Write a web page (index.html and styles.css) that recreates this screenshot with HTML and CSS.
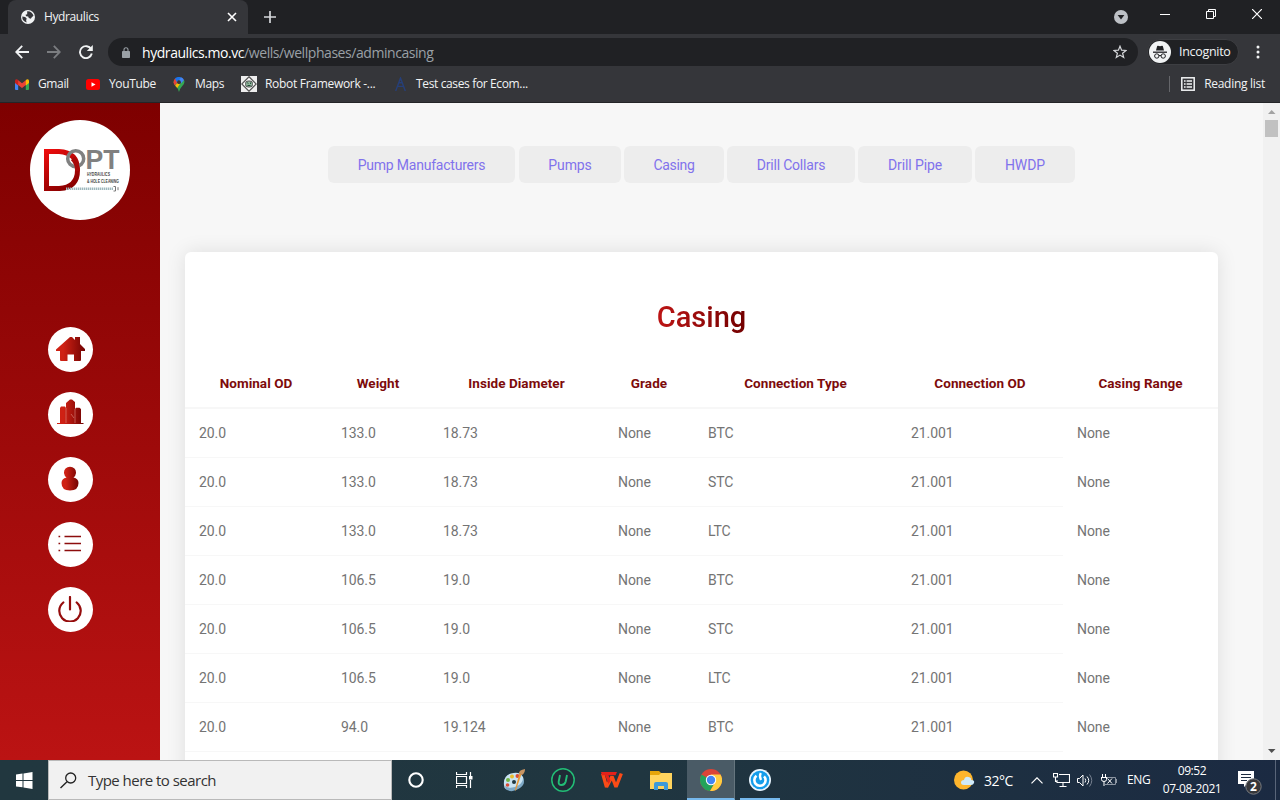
FILE: index.html
```html
<!DOCTYPE html>
<html lang="en">
<head>
<meta charset="utf-8">
<title>Hydraulics</title>
<link rel="stylesheet" href="styles.css">
</head>
<body>
<div class="desktop">
  <header class="browser">
    <div class="tabstrip">
      <div class="tab">
        <svg class="globe" width="14" height="14" viewBox="0 0 14 14"><circle cx="7" cy="7" r="7" fill="#f1f3f4"/><path d="M1.3 6.5 4.2 7 5.8 8.7 5.1 10 5.6 12.4A5.7 5.7 0 0 1 1.3 6.5ZM6.2 1.3C9 1 11.8 3 12.5 5.8L10.8 7.2 9.8 8.7 7.8 8 7.2 6.6 5.2 6.3 4.5 4.8 6.2 4.3Z" fill="#35363a"/></svg>
        <span class="tab-title">Hydraulics</span>
        <svg class="tab-close" width="10" height="10" viewBox="0 0 10 10"><path d="M1 1l8 8M9 1L1 9" stroke="#fff" stroke-width="1.6"/></svg>
      </div>
      <svg class="newtab" width="12" height="12" viewBox="0 0 12 12"><path d="M6 0v12M0 6h12" stroke="#d5d7da" stroke-width="1.7"/></svg>
      <div class="window-controls">
        <svg width="14" height="14" viewBox="0 0 14 14"><circle cx="7" cy="7" r="7" fill="#bdc1c6"/><path d="M3.6 5h6.8L7 9.6z" fill="#202124"/></svg>
        <svg width="10" height="10" viewBox="0 0 10 10"><path d="M0 5.5h10" stroke="#fff"/></svg>
        <svg width="10" height="10" viewBox="0 0 10 10"><path d="M.5 2.5h7v7h-7zM2.500 2.500v-2h7v7h-2" fill="none" stroke="#fff"/></svg>
        <svg width="10" height="10" viewBox="0 0 10 10"><path d="M0 0l10 10M10 0L0 10" stroke="#fff" stroke-width="1.2"/></svg>
      </div>
    </div>
    <div class="toolbar">
      <svg class="nav-icon" width="14" height="14" viewBox="0 0 14 14"><path d="M14 7H1.5M7.2 .8 1.2 7l6 6.2" fill="none" stroke="#f1f3f4" stroke-width="1.8"/></svg>
      <svg class="nav-icon" width="14" height="14" viewBox="0 0 14 14"><path d="M0 7h12.5M6.8 .8l6 6.2-6 6.2" fill="none" stroke="#7b7d80" stroke-width="1.8"/></svg>
      <svg class="nav-icon" width="14" height="14" viewBox="0 0 14 14"><path d="M12.2 4.2A6 6 0 1 0 12.8 8.6" fill="none" stroke="#f1f3f4" stroke-width="1.9"/><path d="M13.8 0v6H7.8z" fill="#f1f3f4"/></svg>
      <div class="omnibox">
        <svg width="8" height="11" viewBox="0 0 8 11"><path d="M2 5V2.7a2 2 0 0 1 4 0V5" fill="none" stroke="#9aa0a6" stroke-width="1.1"/><rect y="4" width="8" height="7" rx=".8" fill="#9aa0a6"/></svg>
        <span class="url"><b>hydraulics.mo.vc</b>/wells/wellphases/admincasing</span>
        <svg class="star" width="14" height="14" viewBox="0 0 14 14"><path d="M7 1.2 8.6 5.2 13 5.5 9.6 8.2 10.7 12.5 7 10.1 3.3 12.5 4.4 8.2 1 5.5 5.4 5.2Z" fill="none" stroke="#d5d7da" stroke-width="1.2"/></svg>
      </div>
      <div class="incognito">
        <svg width="22" height="22" viewBox="0 0 22 22"><circle cx="11" cy="11" r="11" fill="#f1f3f4"/><path d="M4 11.2h14" stroke="#202124" stroke-width="1.3"/><path d="M7 9.5 8.1 5.2Q8.3 4.6 9 4.8L11 5.3 13 4.8Q13.7 4.6 13.9 5.2L15 9.5Z" fill="#202124"/><g fill="none" stroke="#202124"><circle cx="7.8" cy="15" r="2.2"/><circle cx="14.2" cy="15" r="2.2"/><path d="M10 14.7q1-.6 2 0"/></g></svg>
        <span>Incognito</span>
      </div>
      <svg class="kebab" width="4" height="14" viewBox="0 0 4 14" fill="#f1f3f4"><circle cx="2" cy="2" r="1.5"/><circle cx="2" cy="7" r="1.5"/><circle cx="2" cy="12" r="1.5"/></svg>
    </div>
    <nav class="bookmarks">
      <span class="bm bm-gmail"><svg width="14" height="11" viewBox="0 0 14 11"><path d="M0 2v8q0 1 1 1h2.200V4z" fill="#4285f4"/><path d="M14 2v8q0 1-1 1h-2.200V4z" fill="#34a853"/><path d="M2.500.7v4.800L7 9l4.500-3.500V.7L7 4.200z" fill="#ea4335"/><path d="M0 1.800Q.2-.6 2.400.5L3.200 1.200v5.300L0 4z" fill="#c5221f"/><path d="M14 1.800Q13.800-.6 11.600.5l-.8.7v5.300L14 4z" fill="#fbbc04"/></svg><span>Gmail</span></span>
      <span class="bm bm-youtube"><svg width="14" height="11" viewBox="0 0 14 11"><rect width="14" height="11" rx="2.5" fill="#f00"/><path d="M5.5 3.2v4.6l4-2.3z" fill="#fff"/></svg><span>YouTube</span></span>
      <span class="bm bm-maps"><svg width="12" height="15" viewBox="0 0 12 15"><path d="M6 15Q5.2 11.8 3 9.6 0 7 .8 3.8L11 3Q12.6 6.5 8.7 9.8 7 11.5 6 15Z" fill="#34a853"/><path d="M.6 5.2Q.6 2.5 2.2 1.2L5 4.5 2 8.4Q.6 7 .6 5.2Z" fill="#ea4335"/><path d="M2 1.3Q5-1 8.5.5L4 5.8Z" fill="#1a73e8"/><path d="M7.500 6 4.300 11 2.200 8.700 5 5Z" fill="#fbbc04"/><path d="M8 .3Q10.2 1 11 3L8 6.5 6 3Z" fill="#4285f4"/><circle cx="6" cy="5.2" r="1.9" fill="#35363a"/></svg><span>Maps</span></span>
      <span class="bm bm-robot"><svg width="16" height="16" viewBox="0 0 16 16"><path fill="#eee" d="M0 0h16v16H0z"/><path d="M8 .8 15.2 8 8 15.2.8 8Z" fill="#fff" stroke="#555" stroke-width="1.300"/><rect x="4.500" y="5" width="7" height="6" rx="2.5" fill="#8fb19a" stroke="#555"/><path d="M5.800 7.500 6.600 6.800 7.300 7.500M9.600 6.500v1.500M6.500 9.500h3" stroke="#1f4f35" fill="none"/></svg><span>Robot Framework -...</span></span>
      <span class="bm bm-test"><svg width="11" height="14" viewBox="0 0 11 14"><path d="M.7 14 5.5 1l4.8 13M2.6 9.4h5.8M4 5.8h3" fill="none" stroke="#263f78" stroke-width="1.4"/></svg><span>Test cases for Ecom...</span></span>
      <span class="reading"><svg width="14" height="14" viewBox="0 0 14 14"><rect x=".8" y=".8" width="12.4" height="12.4" fill="none" stroke="#f1f3f4" stroke-width="1.5"/><path d="M3 4h1.6M3 7h1.6M3 10h1.6M5.6 4H11M5.6 7H11M5.6 10H11" stroke="#f1f3f4" stroke-width="1.4"/></svg><span>Reading list</span></span>
    </nav>
  </header>

  <div class="page">
    <aside class="sidebar">
      <svg class="logo" width="100" height="100" viewBox="0 0 100 100">
        <defs>
          <linearGradient id="dGrad" x1="0" y1="0" x2=".5" y2="1"><stop offset="0" stop-color="#f20d0d"/><stop offset="1" stop-color="#8b0000"/></linearGradient>
          <linearGradient id="iconGrad" x1="0" y1="0" x2="1" y2="0"><stop offset=".25" stop-color="#cf2114"/><stop offset="1" stop-color="#720303"/></linearGradient>
        </defs>
        <circle cx="50" cy="50" r="50" fill="#fff"/>
        <path d="M14 29H29Q50 30 50 50T30 71H14ZM19 34V66H29Q45 65 45 50T29 34Z" fill="url(#dGrad)" fill-rule="evenodd"/>
        <circle cx="45.700" cy="38.700" r="8" fill="none" stroke="#808080" stroke-width="3.500"/>
        <path d="M42.600 38.500Q47.500 43 47.500 51" stroke="#a80808" stroke-width="4.800" fill="none"/>
        <text class="logo-opt" x="55.500" y="48.500" textLength="34" lengthAdjust="spacingAndGlyphs">PT</text>
        <text class="logo-sub" x="57" y="56.300" textLength="23" lengthAdjust="spacingAndGlyphs">HYDRAULICS</text>
        <text class="logo-sub" x="57" y="62.800" textLength="32" lengthAdjust="spacingAndGlyphs">&amp; HOLE CLEANING</text>
        <path d="M36 68.700H83" stroke="#9fb9be" stroke-width="2.600" stroke-dasharray="1.400 .6"/>
        <path d="M83.500 66.500h2v4.500h-2M88 67.200v3" stroke="#777" fill="none"/>
      </svg>
      <nav class="side-nav">
        <a class="side-btn"><svg width="29" height="26" viewBox="0 0 29 26"><path d="M0 15V13.500L14 1h2l3 3V1h5v7l5 5v2h-4v9q0 1-1 1h-6v-6.500h-6.500V25H5q-1 0-1-1v-9Z" fill="url(#iconGrad)"/></svg></a>
        <a class="side-btn side-wells"><svg width="27" height="26" viewBox="0 0 27 26"><path d="M0 24h3V9l1-1.500h4L9 9V4l4-3.500h2L18 3v7l1-1.200h3.500L24 10v14h2.500v1H0Z" fill="url(#iconGrad)"/><path d="M9 9v15M18 10v14M14 15l3 4" stroke="#db8b82" stroke-width=".6"/></svg></a>
        <a class="side-btn"><svg width="18" height="25" viewBox="0 0 18 25"><path d="M5.500 11.500A6 6 0 1 1 12.500 11.500Q17.500 12.500 17.500 17 17.500 24.500 9 24.500T.5 17Q.5 12.500 5.500 11.500Z" fill="url(#iconGrad)"/></svg></a>
        <a class="side-btn"><svg width="24" height="17" viewBox="0 0 24 17"><path d="M6.500 1.500H23M6.500 8.500H23M6.500 15.500H23" stroke="#8d0d0d" stroke-width="1.700"/><path d="M.5 1.500H2.200M.5 8.500H2.200M.5 15.500H2.200" stroke="#8d0d0d" stroke-width="1.500"/></svg></a>
        <a class="side-btn"><svg width="24" height="26" viewBox="0 0 24 26"><path d="M5.300 6.500A10.700 10.700 0 1 0 18.700 6.500M12 1v12.500" fill="none" stroke="#950c0c" stroke-width="2.200" stroke-linecap="round"/></svg></a>
      </nav>
    </aside>

    <main class="content">
      <nav class="pills">
        <a class="pill pill-manufacturers">Pump Manufacturers</a>
        <a class="pill pill-pumps">Pumps</a>
        <a class="pill pill-casing">Casing</a>
        <a class="pill pill-collars">Drill Collars</a>
        <a class="pill pill-pipe">Drill Pipe</a>
        <a class="pill pill-hwdp">HWDP</a>
      </nav>
      <section class="card">
        <h1><span>Casing</span></h1>
        <table>
          <colgroup><col class="c1"><col class="c2"><col class="c3"><col class="c4"><col class="c5"><col class="c6"><col class="c7"></colgroup>
          <thead><tr><th>Nominal OD</th><th>Weight</th><th>Inside Diameter</th><th>Grade</th><th>Connection Type</th><th>Connection OD</th><th>Casing Range</th></tr></thead>
          <tbody>
            <tr><td>20.0</td><td>133.0</td><td>18.73</td><td>None</td><td>BTC</td><td>21.001</td><td>None</td></tr>
            <tr><td>20.0</td><td>133.0</td><td>18.73</td><td>None</td><td>STC</td><td>21.001</td><td>None</td></tr>
            <tr><td>20.0</td><td>133.0</td><td>18.73</td><td>None</td><td>LTC</td><td>21.001</td><td>None</td></tr>
            <tr><td>20.0</td><td>106.5</td><td>19.0</td><td>None</td><td>BTC</td><td>21.001</td><td>None</td></tr>
            <tr><td>20.0</td><td>106.5</td><td>19.0</td><td>None</td><td>STC</td><td>21.001</td><td>None</td></tr>
            <tr><td>20.0</td><td>106.5</td><td>19.0</td><td>None</td><td>LTC</td><td>21.001</td><td>None</td></tr>
            <tr><td>20.0</td><td>94.0</td><td>19.124</td><td>None</td><td>BTC</td><td>21.001</td><td>None</td></tr>
          </tbody>
        </table>
      </section>
    </main>

    <div class="scrollbar">
      <svg width="17" height="17" viewBox="0 0 17 17"><path d="M5 11h7.500L8.700 7z" fill="#a3a3a3"/></svg>
      <div class="thumb"></div>
      <svg class="down" width="17" height="17" viewBox="0 0 17 17"><path d="M5 6h7.500L8.700 10z" fill="#505050"/></svg>
    </div>
  </div>

  <footer class="taskbar">
    <div class="start"><svg width="17" height="17" viewBox="0 0 17 17" fill="#fff"><path d="M0 2.500 6.500 1.600V8H0ZM7.500 1.400 16.500 0V8h-9ZM0 9h6.500v6.200L0 14.400ZM7.500 9h9v8l-9-1.400Z"/></svg></div>
    <div class="search"><svg width="17" height="17" viewBox="0 0 17 17"><circle cx="10.700" cy="6" r="5" fill="none" stroke="#222" stroke-width="1.300"/><path d="M7 9.800.5 16" stroke="#222" stroke-width="1.400"/></svg><span>Type here to search</span></div>
    <div class="apps">
      <div class="app"><svg width="16" height="16" viewBox="0 0 16 16"><circle cx="8" cy="8" r="6.700" fill="none" stroke="#fff" stroke-width="2.100"/></svg></div>
      <div class="app"><svg width="17" height="16" viewBox="0 0 17 16"><path d="M.5 0v2.500h10V0M.5 16v-2.500h10V16M.5 4.500h10v7H.5zM14.500 0v4M14.500 8v8" fill="none" stroke="#fff" stroke-width="1.200"/><path d="M13 4h3.500v3.500H13z" fill="#fff"/></svg></div>
      <div class="app"><svg width="24" height="24" viewBox="0 0 24 24"><path d="M2 17Q1 8 9 5.500 18 3 21 9q2 6-4 10-7 5-13 2-2-1-2-4Z" fill="#c9e3f2"/><path d="M3 18q6 4 14-1 4-3 4-7 3 6-3 10-7 5-13 2-2-1-2-4Z" fill="#7ea9c6"/><circle cx="6" cy="12" r="2" fill="#72b644"/><circle cx="10" cy="8.500" r="2" fill="#e8bd2e"/><circle cx="15.500" cy="8" r="2" fill="#d84c37"/><circle cx="5.500" cy="17" r="1.800" fill="#d84c37"/><circle cx="12" cy="14" r="2" fill="#20373f"/><path d="M19.500 6 14 22l-1 1 .2-2L17.500 5Z" fill="#e99735"/><path d="M17 5q0-3 6-4 0 4-3 6Z" fill="#c89462"/></svg></div>
      <div class="app"><svg width="24" height="24" viewBox="0 0 24 24"><circle cx="12" cy="12" r="11.200" fill="#202b36" stroke="#22bd76" stroke-width="1.500"/><path d="M9 7 7.700 13.500Q7.200 17 10.500 17T14.700 13.500L16 7" fill="none" stroke="#22bd76" stroke-width="1.900"/></svg></div>
      <div class="app"><svg width="22" height="17" viewBox="0 0 22 17"><path d="M1.700 1.500 5.500 15 11 4.500 15 15 20.300 1.500" fill="none" stroke="#fa4b17" stroke-width="3.400" stroke-linejoin="bevel"/><path d="M0 0H16L14.500 3.200H7.500L9.500 8.500 7.600 12 4 3.200H1Z" fill="#e4211a"/></svg></div>
      <div class="app"><svg width="22" height="19" viewBox="0 0 22 19"><path d="M0 0h9l2 2v16H0z" fill="#e5a50a"/><path d="M0 4h9l2-2h11v16H0z" fill="#ffd45e"/><path d="M4 19v-6q0-2 2-2h10q2 0 2 2v6h-4v-4H8v4Z" fill="#3d9ad8"/></svg></div>
      <div class="app active"><svg width="22" height="22" viewBox="0 0 22 22"><circle cx="11" cy="11" r="11" fill="#db4437"/><path d="M1.500 5.500A11 11 0 0 0 10 22l4-7-3-4Z" fill="#22a35a"/><path d="M20.500 5.500H11l4 8L10 22A11 11 0 0 0 20.500 5.500Z" fill="#ffcd40"/><circle cx="11" cy="11" r="5.200" fill="#fff"/><circle cx="11" cy="11" r="4.200" fill="#4285f4"/></svg></div>
      <div class="app running"><svg width="22" height="22" viewBox="0 0 22 22"><circle cx="11" cy="11" r="11" fill="#eaf6ff"/><circle cx="11" cy="11" r="9.300" fill="#159dea"/><path d="M7.500 6.800A5.600 5.600 0 1 0 15 7.300" fill="none" stroke="#fff" stroke-width="2.600"/><path d="M11.800 4Q10 7 12 11" fill="none" stroke="#fff" stroke-width="2.300"/></svg></div>
    </div>
    <div class="tray">
      <svg class="weather" width="21" height="20" viewBox="0 0 21 20"><circle cx="9.500" cy="10" r="9.500" fill="#fdb52d"/><path d="M10 15Q7 15 7 12.500T10 10Q11 6 14.500 7T17 10Q21 10 20 13q-.6 2-3 2Z" fill="#cfeafa"/></svg>
      <span class="temp">32°C</span>
      <svg class="chevron" width="12" height="7" viewBox="0 0 12 7"><path d="M.5 6.300 6 .8l5.500 5.500" fill="none" stroke="#fff" stroke-width="1.200"/></svg>
      <svg class="network" width="17" height="14" viewBox="0 0 17 14"><path d="M6 1.500h10.500v8H4V7M10 9.500v4M6.500 13.500h7M.5.500h4V4h-4zM2.500 4v4.500H4" fill="none" stroke="#fff" stroke-width="1.100"/></svg>
      <svg class="sound" width="16" height="13" viewBox="0 0 16 13"><path d="M.5 4.500h2L6 1v11L2.500 8.500h-2zM8 4.500q1.500 2 0 4M10 2.500q3.500 4 0 8" fill="none" stroke="#fff"/><path d="M12.500.5q4.500 6 0 12" fill="none" stroke="#788291"/></svg>
      <svg class="battery" width="16" height="13" viewBox="0 0 16 13"><path d="M1.500 0v3M4.500 0v3M0 3.500h6M.5 3.500v2q0 2 2.500 2t2.500-2v-2M3 7.500V12" fill="none" stroke="#fff"/><path d="M6 3.500h8.500v7H4M15.500 5v4" fill="none" stroke="#8d96a2"/><path d="M6.500 4.500l4.500 5M11 4.500l-4.500 5" stroke="#fff"/></svg>
      <span class="lang">ENG</span>
      <div class="clock"><span class="time">09:52</span><span class="date">07-08-2021</span></div>
      <svg class="notice" width="25" height="25" viewBox="0 0 25 25"><path d="M0 1h16v13H9l-3 3v-3H0Z" fill="#fff"/><path d="M3 4.500h10M3 7.500h10M3 10.500h6" stroke="#1c2b3f"/><circle cx="15.500" cy="16.500" r="7.700" fill="#36373a" stroke="#787b80"/><text class="badge-text" x="15.500" y="20.700" text-anchor="middle">2</text></svg>
    </div>
  </footer>
</div>
</body>
</html>
```
FILE: styles.css
```css
* { box-sizing: border-box; }
body { margin: 0; }
svg { display: block; flex: none; }
.desktop { width: 1280px; height: 800px; display: flex; flex-direction: column; overflow: hidden; font-family: "Open Sans", "Noto Sans", sans-serif; }

.browser { height: 103px; flex: none; background: #35363a; color: #f1f3f4; font-size: 12px; border-bottom: 1px solid #242528; }
.browser span { white-space: nowrap; }
.tabstrip { height: 34px; background: #202124; display: flex; align-items: center; padding-left: 8px; }
.tab { width: 240px; height: 34px; background: #35363a; border-radius: 8px 8px 0 0; display: flex; align-items: center; padding: 0 11px 0 13px; }
.tab-title { margin-left: 9px; letter-spacing: -0.38px; flex: 1; padding-bottom: 1px; }
.newtab { margin-left: 16px; }
.window-controls { margin-left: auto; margin-right: 18px; display: flex; align-items: center; gap: 36px; height: 28px; padding-bottom: 6px; }
.window-controls svg:first-child { margin-right: -4px; margin-top: 6px; }
.toolbar { height: 36px; display: flex; align-items: center; padding-left: 15px; }
.nav-icon { margin-right: 18px; }
.omnibox { width: 1030px; height: 28px; margin-left: -3px; border-radius: 14px; background: #202124; display: flex; align-items: center; padding: 0 11px 0 14px; }
.url { margin-left: 12px; color: #9aa0a6; font-size: 14px; letter-spacing: -0.44px; }
.url b { font-weight: 400; color: #fff; }
.star { margin-left: auto; }
.incognito { display: flex; align-items: center; width: 92px; height: 26px; margin-left: 9px; border-radius: 13px; background: #202124; padding-left: 1px; border: 1px solid #3d3e42; }
.incognito span { margin-left: 8px; font-size: 12.5px; letter-spacing: -0.3px; padding-bottom: 1px; }
.kebab { margin-left: 17px; }
.bookmarks { height: 28px; display: flex; align-items: center; padding-left: 15px; letter-spacing: -0.36px; }
.bm > span, .reading > span { padding-bottom: 1px; }
.bm, .reading { display: flex; align-items: center; gap: 9px; }
.bm-gmail { width: 71px; }
.bm-youtube { width: 87px; }
.bm-maps { width: 68px; gap: 10px; }
.bm-robot { width: 154px; gap: 8px; letter-spacing: -.3px; }
.bm-test { gap: 10px; }
.reading { margin-left: auto; margin-right: 15px; padding-left: 11px; border-left: 1px solid #65666a; height: 16px; letter-spacing: -0.28px; }

.page { flex: 1; min-height: 0; display: flex; background: #f7f7f7; }
.sidebar { width: 160px; flex: none; background: linear-gradient(#7e0000, #bb1313); padding: 17px 0 0 30px; }
.logo { font-family: "Liberation Sans", sans-serif; }
.logo-opt { font-size: 27px; font-weight: 700; fill: #808080; }
.logo-sub { font-size: 4.6px; font-weight: 700; fill: #444; }
.side-nav { margin: 107.300px 0 0 18px; display: flex; flex-direction: column; gap: 20px; }
.side-btn { width: 45px; height: 45px; border-radius: 50%; background: #fff; display: flex; align-items: center; justify-content: center; padding: 0 1px 2px 0; }
.side-wells { padding: 0 0 6px; }

.content { flex: 1; min-width: 0; overflow: hidden; padding: 43px 45px 0 25px; font-family: Roboto, "Noto Sans", sans-serif; }
.pills { display: flex; gap: 3px; padding-left: 143px; }
.pill { height: 37px; flex: none; display: flex; align-items: center; justify-content: center; border-radius: 6px; background: #ededed; color: #8172ec; font-size: 14px; letter-spacing: -.1px; white-space: nowrap; }
.pill-manufacturers { width: 187px; margin-right: 1px; letter-spacing: -.22px; }
.pill-pumps { width: 102px; }
.pill-casing { width: 100px; letter-spacing: -.3px; }
.pill-collars { width: 128px; letter-spacing: -.2px; }
.pill-pipe { width: 114px; }
.pill-hwdp { width: 100px; }
.card { width: 1033px; height: 620px; margin-top: 69px; background: #fff; border-radius: 6px; box-shadow: 0 0 20px rgba(0, 0, 0, .1); }
h1 { margin: 0; height: 107px; padding-top: 44px; text-align: center; font-size: 29px; line-height: 42px; font-weight: 500; letter-spacing: 0; }
h1 span { color: transparent; background: linear-gradient(90deg, #bd1515, #720000); background-clip: text; -webkit-background-clip: text; }
table { width: 1033px; border-collapse: separate; border-spacing: 0; table-layout: fixed; font-size: 14px; }
.c1 { width: 142px; } .c2 { width: 102px; } .c3 { width: 175px; } .c4 { width: 90px; } .c5 { width: 203px; } .c6 { width: 166px; } .c7 { width: 155px; }
th { height: 50px; padding: 0; text-align: center; color: #7d0b0b; font-size: 13.5px; font-weight: 700; letter-spacing: .05px; border-bottom: 2px solid #f7f7f7; white-space: nowrap; }
td { height: 49px; padding: 0 14px; color: #747474; letter-spacing: -.1px; border-bottom: 1px solid #f7f7f7; }
td:last-child { border-bottom-color: transparent; }
.scrollbar { width: 17px; background: #f1f1f1; display: flex; flex-direction: column; align-items: center; }
.thumb { width: 13px; height: 17px; background: #c1c1c1; }
.down { margin-top: auto; }

.taskbar { height: 40px; flex: none; display: flex; background: linear-gradient(90deg, #21373f, #203640 50%, #1b2a42); color: #fff; }
.start { width: 48px; display: flex; align-items: center; justify-content: center; }
.search { width: 344px; background: #f1f1f1; border: 1px solid #b9b9b9; display: flex; align-items: center; padding-left: 11px; color: #333; font-size: 15px; letter-spacing: -0.53px; }
.search span { margin-left: 11px; white-space: nowrap; }
.apps { display: flex; }
.app { width: 49px; display: flex; align-items: center; justify-content: center; }
.app:nth-child(1), .app:nth-child(2) { width: 48px; }
.app:nth-child(3) { margin-left: 1px; }
.active { margin-left: 2px; width: 48px; background: #4a5b66; border-bottom: 2px solid #76b9ed; border-right: 1px solid #65757e; }
.running { border-bottom: 2px solid #76b9ed; width: 40px; margin-left: 5px; }
.active svg, .running svg { margin-top: 2px; }
.tray { margin-left: auto; display: flex; align-items: center; width: 322px; font-size: 12px; white-space: nowrap; border-right: 1px solid #596579; margin-right: 4px; }
.temp { width: 37px; margin-left: 9px; font-size: 14px; letter-spacing: -.5px; }
.chevron { margin-left: 10px; }
.network { margin-left: 10px; }
.sound { margin-left: 7px; }
.battery { margin-left: 8px; }
.lang { margin-left: 10px; width: 25px; letter-spacing: -.4px; padding-bottom: 1px; }
.clock { margin-left: 10px; width: 60px; display: flex; flex-direction: column; align-items: center; line-height: 18px; letter-spacing: -.4px; }
.notice { margin-left: 16px; margin-top: 5px; }
.badge-text { fill: #fff; font-size: 12px; font-weight: 700; }
```
